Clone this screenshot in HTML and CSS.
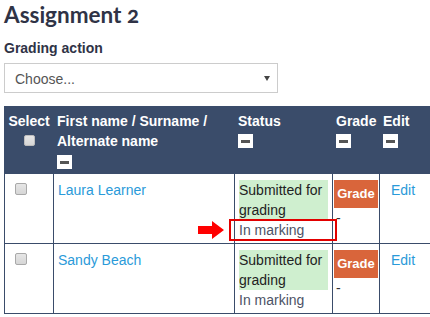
FILE: index.html
```html
<!DOCTYPE html>
<html lang="en">
<head>
<meta charset="utf-8">
<title>Assignment 2</title>
<link rel="stylesheet" href="styles.css">
</head>
<body>
<div class="page">
  <h2 class="title">Assignment 2</h2>
  <div class="field">
    <div class="label">Grading action</div>
    <div class="select">
      <span class="select-text">Choose...</span>
      <svg class="caret" width="6" height="5" viewBox="0 0 6 5"><path d="M0 0H6L3 5Z" fill="#444"/></svg>
    </div>
  </div>
  <table class="grid">
    <colgroup>
      <col class="c-select"><col class="c-name"><col class="c-status"><col class="c-grade"><col class="c-edit">
    </colgroup>
    <thead>
      <tr>
        <th class="th-select">
          <div class="line">Select</div>
          <div class="line center"><span class="cb cb-head"></span></div>
        </th>
        <th>
          <div class="line">First name / Surname /</div>
          <div class="line">Alternate name</div>
          <div class="line icon-low"><span class="minus"></span></div>
        </th>
        <th class="th-status">
          <div class="line">Status</div>
          <div class="line icon-mid"><span class="minus"></span></div>
        </th>
        <th>
          <div class="line">Grade</div>
          <div class="line icon-mid"><span class="minus"></span></div>
        </th>
        <th>
          <div class="line">Edit</div>
          <div class="line icon-mid"><span class="minus"></span></div>
        </th>
      </tr>
    </thead>
    <tbody>
      <tr>
        <td class="td-select"><span class="cb"></span></td>
        <td class="td-name"><a class="link" href="#">Laura Learner</a></td>
        <td class="td-status">
          <div class="submitted">Submitted for grading</div>
          <div class="marking">In marking
            <span class="arrow"><svg width="26" height="18" viewBox="0 0 26 18"><path d="M0 5H14V0L26 9L14 18V13H0Z" fill="#f00"/></svg></span>
            <span class="highlight"></span>
          </div>
        </td>
        <td class="td-grade"><span class="btn">Grade</span><div class="dash">-</div></td>
        <td class="td-edit"><a class="link" href="#">Edit</a></td>
      </tr>
      <tr>
        <td class="td-select"><span class="cb"></span></td>
        <td class="td-name"><a class="link" href="#">Sandy Beach</a></td>
        <td class="td-status">
          <div class="submitted">Submitted for grading</div>
          <div class="marking">In marking</div>
        </td>
        <td class="td-grade"><span class="btn">Grade</span><div class="dash">-</div></td>
        <td class="td-edit"><a class="link" href="#">Edit</a></td>
      </tr>
    </tbody>
  </table>
</div>
</body>
</html>
```
FILE: styles.css
```css
html, body {
  margin: 0;
  padding: 0;
  overflow: hidden;
  background: #fff;
}
.page {
  padding: 0 0 0 4px;
  font-family: "Liberation Sans", Arial, sans-serif;
  font-size: 14px;
  color: #333;
}
.title {
  margin: 0;
  font-family: Lato, "Open Sans", sans-serif;
  font-weight: 700;
  font-size: 22.5px;
  line-height: 30px;
  color: #2f3346;
  font-variant-numeric: oldstyle-nums;
}
.field {
  margin-top: 8px;
}
.label {
  font-weight: 700;
  line-height: 20px;
  color: #2f3346;
}
.select {
  margin-top: 5px;
  height: 28px;
  border: 1px solid #ccc;
  display: flex;
  align-items: center;
  justify-content: space-between;
  padding: 0 7px 0 10px;
  box-sizing: content-box;
  width: 255px;
}
.select-text {
  color: #555;
  line-height: 20px;
  padding-top: 1px;
}
.caret {
  display: block;
}
.grid {
  margin-top: 13px;
  border-collapse: collapse;
  table-layout: fixed;
  width: 436px;
}
.c-select { width: 49px; }
.c-name { width: 181px; }
.c-status { width: 98px; }
.c-grade { width: 47px; }
.c-edit { width: 61px; }
.grid th {
  background: #3a4c6a;
  color: #fff;
  text-align: left;
  vertical-align: top;
  font-weight: 700;
  font-size: 14px;
  line-height: 20px;
  padding: 4px 3px 2px;
  border: 1px solid #3a4c6a;
  white-space: nowrap;
}
.grid th.th-select {
  text-align: center;
  padding-left: 1px;
  padding-right: 1px;
}
.grid th.th-status {
  padding-left: 3px;
}
.line {
  height: 20px;
}
.center {
  display: flex;
  justify-content: center;
  align-items: center;
}
.icon-low {
  padding-top: 4px;
  height: 16px;
}
.icon-mid {
  padding-top: 3px;
  height: 17px;
}
.minus {
  display: flex;
  width: 15px;
  height: 14px;
  background: #fff;
  align-items: center;
  justify-content: center;
}
.minus::before {
  content: "";
  width: 9px;
  height: 3px;
  background: #555;
}
.cb {
  display: block;
  width: 10px;
  height: 10px;
  border: 1px solid #a9a9a9;
  border-radius: 2px;
  background: linear-gradient(#e6e6e6, #d6d6d6);
}
.cb-head {
  width: 9px;
  height: 9px;
  margin-top: -2px;
  border-color: #bdbdbd;
}
.grid td {
  vertical-align: top;
  border: 1px solid #3a4c6a;
  line-height: 20px;
  padding: 6px 4px 3px;
  height: 60px;
}
.grid td.td-select {
  padding-left: 10px;
}
.td-select .cb {
  margin-top: 3px;
}
.link {
  color: #2a9ad9;
  text-decoration: none;
}
.td-status {
  color: #333;
}
.submitted {
  background: #cfefcf;
  color: #222;
}
.marking {
  position: relative;
  color: #4d5366;
}
.highlight {
  position: absolute;
  left: -10px;
  top: -1px;
  width: 104px;
  height: 18px;
  border: 2px solid #e20000;
  pointer-events: none;
}
.arrow {
  position: absolute;
  left: -41px;
  top: 1px;
  line-height: 0;
}
.grid td.td-grade {
  padding-left: 1px;
  padding-right: 1px;
}
.btn {
  display: block;
  width: 44px;
  height: 28px;
  line-height: 28px;
  text-align: center;
  background: #d9653b;
  color: #fff;
  font-weight: 700;
  font-size: 13px;
}
.dash {
  padding-left: 2px;
}
.grid td.td-edit {
  padding-left: 11px;
}
```
